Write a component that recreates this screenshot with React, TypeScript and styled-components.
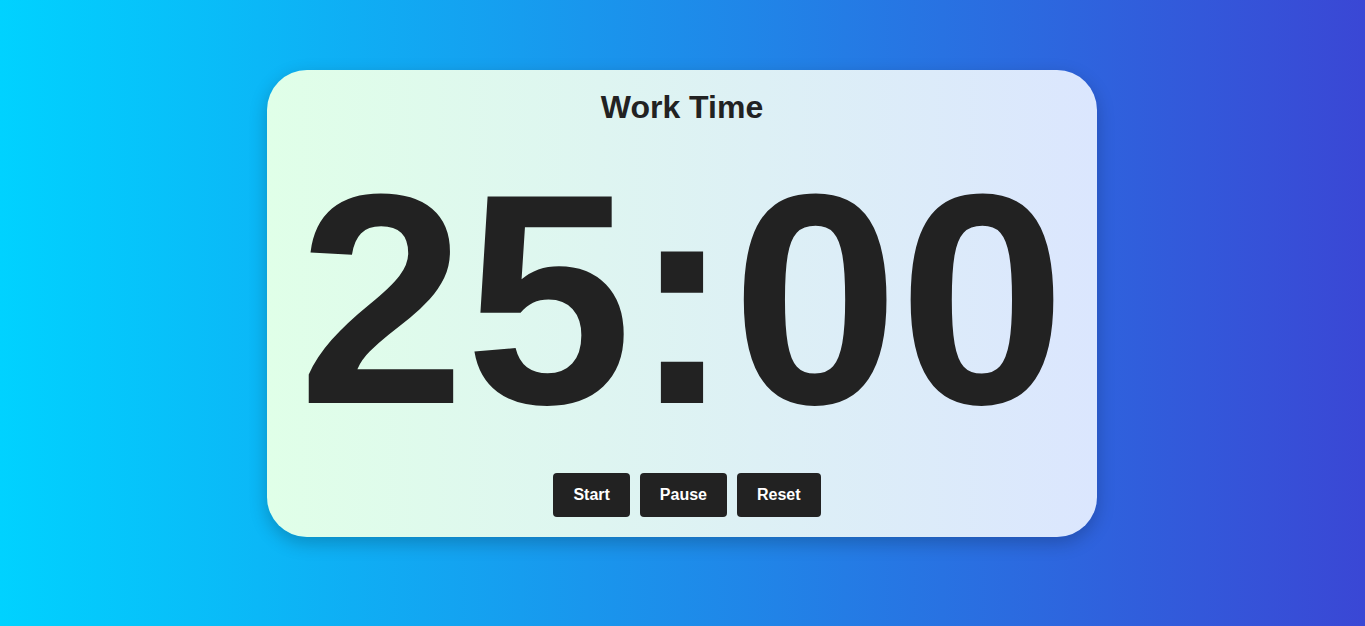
import React from "react";
import styled, { createGlobalStyle } from "styled-components";

const Global = createGlobalStyle`
  html, body { margin: 0; padding: 0; }
  body {
    font-family: "Liberation Sans", Arial, sans-serif;
    min-height: 626px;
    background: linear-gradient(to right, #00d2ff, #3a47d5);
  }
`;

const Page = styled.main`
  display: flex;
  justify-content: center;
  align-items: flex-start;
  padding: 70px 1px 0 0;
  min-height: 556px;
`;

const Card = styled.section`
  width: 830px;
  height: 467px;
  box-sizing: border-box;
  padding: 19px 20px 20px;
  border-radius: 40px;
  background: linear-gradient(to right, #e0ffe8, #dbe6fe);
  box-shadow: 0 6px 18px rgba(0, 0, 0, 0.22);
  display: flex;
  flex-direction: column;
  align-items: center;
  color: #222;
`;

const Title = styled.h1`
  margin: 0;
  font-size: 32px;
  font-weight: 700;
  line-height: normal;
`;

const Timer = styled.div`
  margin-top: 6px;
  font-size: 300px;
  font-weight: 700;
  line-height: 335px;
  letter-spacing: 0;
`;

const Controls = styled.div`
  margin-top: 6px;
  display: flex;
`;

const Button = styled.button`
  font-family: "Liberation Sans", Arial, sans-serif;
  font-size: 16px;
  font-weight: 700;
  color: #fff;
  background: #222;
  border: none;
  border-radius: 4px;
  margin-left: 10px;
  padding: 13px 20px;
  line-height: 18px;
  cursor: pointer;
`;

export default function App() {
  return (
    <>
      <Global />
      <Page>
        <Card>
          <Title>Work Time</Title>
          <Timer>25:00</Timer>
          <Controls>
            <Button>Start</Button>
            <Button>Pause</Button>
            <Button>Reset</Button>
          </Controls>
        </Card>
      </Page>
    </>
  );
}
